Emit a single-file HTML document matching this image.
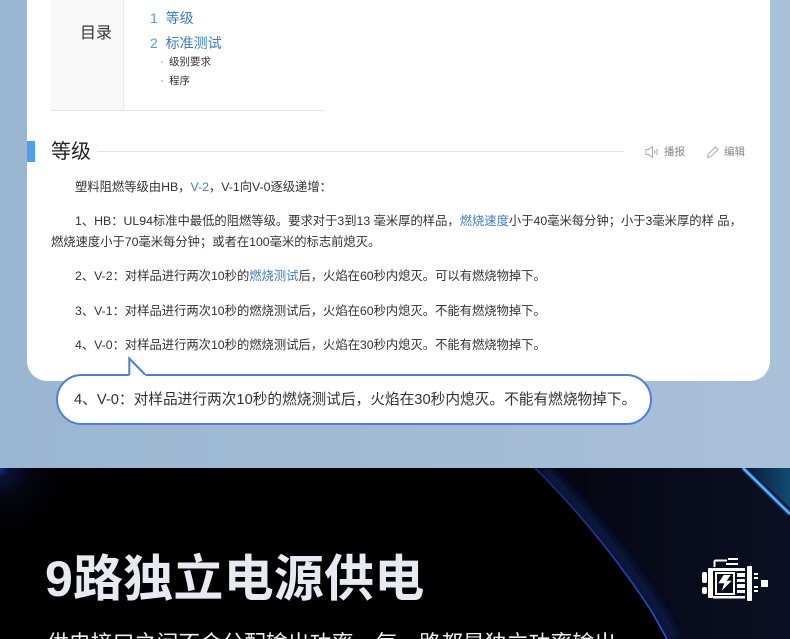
<!DOCTYPE html>
<html lang="zh-CN">
<head>
<meta charset="utf-8">
<style>
html,body{margin:0;padding:0}
body{width:790px;height:639px;position:relative;overflow:hidden;background:linear-gradient(90deg,#9bb6d1,#a8c0d8);font-family:"Liberation Sans","Noto Sans CJK SC",sans-serif;color:#333}
.a{position:absolute;white-space:nowrap}
.t{font-size:12.3px;line-height:18px;color:#333}
.l{color:#3f7ccf}
</style>
</head>
<body>
<div class="a" style="left:27px;top:-40px;width:743px;height:421px;background:#fff;border-radius:20px"></div>

<!-- catalog -->
<div class="a" style="left:51px;top:0;width:72px;height:110px;background:#f9f9f9;border-right:1px solid #e8e8e8"></div>
<div class="a" style="left:51px;top:110px;width:274px;height:1px;background:#e4e4e4"></div>
<div class="a" style="left:80px;top:24px;font-size:16px;line-height:20px;color:#333;font-weight:400">目录</div>
<div class="a" style="left:150px;top:9px;font-size:14px;line-height:18px;color:#3f7ccf"><span style="color:#5a9bea">1</span>&nbsp;&nbsp;等级</div>
<div class="a" style="left:150px;top:34px;font-size:14px;line-height:18px;color:#3f7ccf"><span style="color:#5a9bea">2</span>&nbsp;&nbsp;标准测试</div>
<div class="a" style="left:161px;top:61px;width:2px;height:2px;background:#ccc"></div>
<div class="a" style="left:169px;top:54px;font-size:10.5px;line-height:16px;color:#333">级别要求</div>
<div class="a" style="left:161px;top:80px;width:2px;height:2px;background:#ccc"></div>
<div class="a" style="left:169px;top:73px;font-size:10.5px;line-height:16px;color:#333">程序</div>

<!-- heading -->
<div class="a" style="left:27px;top:141px;width:8px;height:21px;background:#4f9cf5"></div>
<div class="a" style="left:51px;top:140px;font-size:20px;line-height:24px;color:#222">等级</div>
<div class="a" style="left:97px;top:151px;width:527px;height:1px;background:#e4e4e4"></div>
<svg class="a" style="left:645px;top:145px" width="14" height="14" viewBox="0 0 14 14" fill="none" stroke="#aaa" stroke-width="1"><path d="M1 4.500h2.500L7.500 1.500v11L3.500 9.500H1z"/><path d="M9.500 5c.7 1.300.7 2.700 0 4M11.500 4c1 2 1 4 0 6"/></svg>
<div class="a" style="left:664px;top:144px;font-size:10.500px;line-height:16px;color:#888">播报</div>
<svg class="a" style="left:706px;top:145px" width="14" height="14" viewBox="0 0 14 14" fill="none" stroke="#aaa" stroke-width="1"><path d="M1.500 12.500l.8-3.300L9.500 2l2.500 2.500-7.200 7.200z"/></svg>
<div class="a" style="left:724px;top:144px;font-size:10.500px;line-height:16px;color:#888">编辑</div>

<!-- body -->
<div class="a t" style="left:75px;top:178px">塑料阻燃等级由HB，<span class="l">V-2</span>，V-1向V-0逐级递增：</div>
<div class="a t" style="left:75px;top:212px">1、HB：UL94标准中最低的阻燃等级。要求对于3到13 毫米厚的样品，<span class="l">燃烧速度</span>小于40毫米每分钟；小于3毫米厚的样 品，</div>
<div class="a t" style="left:51px;top:233px">燃烧速度小于70毫米每分钟；或者在100毫米的标志前熄灭。</div>
<div class="a t" style="left:75px;top:267px">2、V-2：对样品进行两次10秒的<span class="l">燃烧测试</span>后，火焰在60秒内熄灭。可以有燃烧物掉下。</div>
<div class="a t" style="left:75px;top:302px">3、V-1：对样品进行两次10秒的燃烧测试后，火焰在60秒内熄灭。不能有燃烧物掉下。</div>
<div class="a t" style="left:75px;top:336px">4、V-0：对样品进行两次10秒的燃烧测试后，火焰在30秒内熄灭。不能有燃烧物掉下。</div>

<!-- bubble -->
<div class="a" style="left:55.5px;top:373.500px;width:596px;height:51px;box-sizing:border-box;background:#fff;border:2px solid #4d7fd6;border-radius:25.500px"></div>
<svg class="a" style="left:120px;top:350px" width="34" height="30" viewBox="0 0 34 30"><path d="M9.300 26V8.500L25.500 24.700V26z" fill="#fff"/><path d="M9.300 25V8.500L25 24.500" fill="none" stroke="#4d7fd6" stroke-width="2"/></svg>
<div class="a" style="left:74px;top:390px;font-size:14.7px;line-height:20px;color:#333">4、V-0：对样品进行两次10秒的燃烧测试后，火焰在30秒内熄灭。不能有燃烧物掉下。</div>

<!-- dark section -->
<div class="a" style="left:0;top:468px;width:790px;height:171px;background:#000;overflow:hidden">
<svg width="790" height="171" style="position:absolute;left:0;top:0">
<defs>
<radialGradient id="g0" cx="0" cy="0" r="1"><stop offset="0" stop-color="#1c2f88"/><stop offset=".12" stop-color="#0b1238"/><stop offset=".45" stop-color="#04050f"/><stop offset="1" stop-color="#000"/></radialGradient>
<linearGradient id="g1" x1="0" y1="0" x2="1" y2="0"><stop offset="0" stop-color="#04050f"/><stop offset="1" stop-color="#0b1024"/></linearGradient>
<linearGradient id="arc" x1="0" y1="0" x2="0" y2="1"><stop offset="0" stop-color="#14276e"/><stop offset=".5" stop-color="#1f3fb0"/><stop offset="1" stop-color="#2b52e6"/></linearGradient>
<linearGradient id="corner" x1="0" y1="0" x2="1" y2="0"><stop offset="0" stop-color="#08203f"/><stop offset="1" stop-color="#134a70"/></linearGradient>
<filter id="b" x="-50%" y="-50%" width="200%" height="200%"><feGaussianBlur stdDeviation="5"/></filter>
<filter id="b2" x="-50%" y="-50%" width="200%" height="200%"><feGaussianBlur stdDeviation=".8"/></filter>
</defs>
<rect x="0" y="0" width="70" height="70" fill="url(#g0)"/>
<path d="M535 0C570 35 600 70 628 109S655 150 667 171H790V0z" fill="url(#g1)"/>
<path d="M542 0C577 35 607 70 635 109S662 150 674 171" fill="none" stroke="#0e1b4c" stroke-width="10" filter="url(#b)"/>
<path d="M535 0C570 35 600 70 628 109S655 150 667 171H500V0z" fill="#000"/>
<path d="M535 0C570 35 600 70 628 109S655 150 667 171" fill="none" stroke="url(#arc)" stroke-width="1.600"/>
<path d="M748 0H790V40z" fill="url(#corner)"/>
<path d="M743 0L790 46" stroke="#2f8df0" stroke-width="3.500" fill="none" filter="url(#b2)"/>
<path d="M743 0L790 46" stroke="#6cc0ff" stroke-width="1.500" fill="none"/>
</svg>
<div class="a" style="left:45px;top:83px;font-size:50px;line-height:56px;font-weight:700;color:#e8eaf2;letter-spacing:.2px">9路独立电源供电</div>
<div class="a" style="left:47px;top:162px;font-size:21.9px;line-height:28px;color:#eceef4">供电接口之间不会分配输出功率，每一路都是独立功率输出</div>
<!-- motor icon -->
<svg class="a" style="left:702px;top:90px" width="66" height="46" viewBox="0 0 66 46" fill="#fff">
<rect x="0" y="14" width="5" height="11" rx="2"/><rect x="0" y="29" width="5" height="7" rx="2"/>
<rect x="6" y="10" width="5" height="30" rx="1"/>
<path d="M11 10h32v3H11zM11 38h32v2.500H11z"/>
<path d="M13 14h20v23H13zM15 16v19h16V16z" fill-rule="evenodd"/>
<path d="M35 15h8v4h-8zM35 21h8v3h-8zM35 26h8v4h-8zM35 32h8v3h-8z"/>
<rect x="45" y="8" width="5" height="35" rx="1"/>
<path d="M52 15h4v2h-4zM52 19h4v2h-4zM52 28h4v2h-4zM52 32h4v2h-4z"/>
<rect x="59" y="22" width="7" height="7"/>
<path d="M21.700 17H28.700L24.700 22.700H29.700L19.700 32.700L22.300 25.300H16.300z"/>
<path d="M12.500 9V4Q12.500 2.500 14 2.500H25" fill="none" stroke="#fff" stroke-width="2"/>
<path d="M26 0h10v2H26zM24 5h12v2H24z"/>
</svg>
</div>
</body>
</html>
